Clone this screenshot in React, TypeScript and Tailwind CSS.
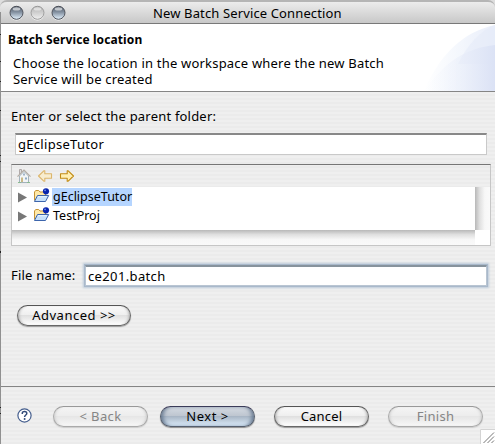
import React from "react";

const STRIPES =
  "bg-[repeating-linear-gradient(180deg,#efefef_0px,#efefef_2px,#ebebeb_2px,#ebebeb_4px)]";

function TrafficLight({ active, id }: { active: boolean; id: string }) {
  return (
    <svg width="15" height="16" viewBox="0 0 15 16" className="block">
      <defs>
        <linearGradient id={id} x1="0" y1="0" x2="0" y2="1">
          <stop offset="0" stopColor={active ? "#4c5563" : "#b0b0b0"} />
          <stop offset="0.45" stopColor={active ? "#8390a0" : "#cdcdcd"} />
          <stop offset="1" stopColor={active ? "#e4f3ff" : "#f0f0f0"} />
        </linearGradient>
      </defs>
      <circle cx="7.5" cy="8.5" r="6.9" fill="#f4f4f4" />
      <circle cx="7.5" cy="7.8" r="6.5" fill={"url(#" + id + ")"} stroke={active ? "#4b4f58" : "#999"} strokeWidth="1" />
      <ellipse cx="7.5" cy="3.9" rx="3.8" ry="1.7" fill="#fff" opacity={active ? 0.6 : 0.5} />
    </svg>
  );
}

function HomeIcon() {
  return (
    <svg width="14" height="16" viewBox="0 0 14 16" className="block">
      <path d="M2.5 8v6.5h9V8L7 3.5z" fill="#f2f5f6" stroke="#a3b2bc" />
      <path d="M2.5 6V1.5h2V4" fill="#ddd" stroke="#b0a9a9" />
      <path d="M.5 8.7L7 2l6.5 6.7" fill="none" stroke="#b3aca4" strokeWidth="1.2" />
      <path d="M6 5.5h2v2H6z" fill="#9fb3c7" />
      <path d="M4 9.5h2V14H4z" fill="#c9b988" />
      <path d="M8 9.5h2v2H8z" fill="#8fabc5" />
      <path d="M1 14.5h3M10 14.5h3" stroke="#8bbb91" />
    </svg>
  );
}

function ArrowIcon({ dim }: { dim: boolean }) {
  return (
    <svg width="16" height="14" viewBox="0 0 16 14" className={dim ? "block -scale-x-100" : "block"}>
      <path
        d="M1.5 4.7h6.7V1.8h1L14.5 7l-5.3 5.2h-1V9.3H1.5z"
        fill={dim ? "#f8edcf" : "#fff0b4"}
        stroke={dim ? "#dcb66c" : "#c18b14"}
        strokeWidth="1.1"
        strokeLinejoin="round"
      />
    </svg>
  );
}

function ProjectIcon() {
  return (
    <svg width="17" height="15" viewBox="0 0 17 15" className="block">
      <path d="M1.5 12.5V4l1.2-1.5h3L7 4h5.5v4" fill="#ffe9a8" stroke="#c59336" />
      <path d="M1.5 13.5l3-6h11.2l-3.2 6z" fill="#c5dffa" stroke="#3d65ac" strokeLinejoin="round" />
      <path d="M5 8.7h8.8" stroke="#edf7ff" />
      <circle cx="13" cy="3.3" r="3.1" fill="#0924ac" />
      <circle cx="12.1" cy="2.3" r="0.9" fill="#6e8eee" />
    </svg>
  );
}

function TreeRow({ label, selected }: { label: string; selected?: boolean }) {
  return (
    <div className="flex h-[19px] items-center">
      <svg width="9" height="11" viewBox="0 0 9 11" className="mt-[2px] ml-[6px] block">
        <path d="M0 0.5L9 5.5L0 10.5z" fill="#777" />
      </svg>
      <div className="-mt-[2px] ml-[6px]"><ProjectIcon /></div>
      <div className={selected ? "ml-[2px] h-[18px] w-[80px] bg-[#b5d5ff] pl-px leading-[16px]" : "ml-[2px] h-[18px] pl-px leading-[16px]"}>
        <span className="text-[12.5px]">{label}</span>
      </div>
    </div>
  );
}

function AquaButton({ children, kind, width }: { children: React.ReactNode; kind: "normal" | "default" | "disabled"; width: string }) {
  const look = {
    normal:
      "border-[#686868] border-t-[#555] bg-[linear-gradient(180deg,#fafafa_0%,#efefef_46%,#e0e0e0_50%,#fff_100%)] shadow-[0_1px_1px_#9b9b9b,inset_3px_0_3px_-2px_#aaa,inset_-3px_0_3px_-2px_#aaa]",
    default:
      "border-[#555f6e] border-t-[#3b3c59] bg-[linear-gradient(180deg,#d4dae2_0%,#bec6d0_46%,#a9b6c5_50%,#dcedfb_100%)] shadow-[0_1px_1px_#8e8e8e,inset_4px_0_4px_-2px_#61748c,inset_-4px_0_4px_-2px_#61748c]",
    disabled:
      "border-[#aaa] border-t-[#999] bg-[linear-gradient(180deg,#f4f4f4_0%,#ededed_46%,#e6e6e6_50%,#f7f7f7_100%)] text-[#858585] shadow-[0_1px_1px_#ccc,inset_3px_0_3px_-2px_#ccc,inset_-3px_0_3px_-2px_#ccc]",
  }[kind];
  return (
    <button className={"flex h-[21px] shrink-0 items-center justify-center rounded-full border whitespace-nowrap " + width + " " + look}>
      {children}
    </button>
  );
}

export default function App() {
  return (
    <div className={"relative flex h-[444px] w-[495px] flex-col overflow-hidden font-['Noto_Sans','Open_Sans',sans-serif] text-[13px] text-black " + STRIPES}>
      <header className="flex h-[24px] shrink-0 bg-[#dedede]">
        <div className="flex w-full items-center rounded-t-[7px] border-t-2 border-b border-t-[#b5b5b5] border-b-[#787878] bg-[linear-gradient(180deg,#ececec,#c8c8c8)] pl-[8.5px]">
          <div className="mt-px flex gap-[6px]">
            <TrafficLight active id="lightClose" />
            <TrafficLight active={false} id="lightMinimize" />
            <TrafficLight active id="lightZoom" />
          </div>
          <h1 className="ml-[87.5px] text-[13px] leading-[18px] font-normal tracking-[0.13px] whitespace-nowrap">New Batch Service Connection</h1>
        </div>
      </header>

      <section className="flex h-[68px] shrink-0 border-b border-[#858585] bg-white">
        <div className="w-[400px] shrink-0">
          <h2 className="mt-[8px] ml-[8px] text-[12px] leading-[16px] font-bold tracking-[0.1px] whitespace-nowrap">Batch Service location</h2>
          <p className="mt-[7px] ml-[13px] leading-[16px] tracking-[0.2px] whitespace-nowrap">
            Choose the location in the workspace where the new Batch
            <br />
            Service will be created
          </p>
        </div>
        <svg width="95" height="67" viewBox="0 0 95 67" className="block shrink-0">
          <defs>
            <linearGradient id="waveBack" x1="0" x2="1">
              <stop offset="0" stopColor="#fff" />
              <stop offset="0.45" stopColor="#f5f8fd" />
              <stop offset="1" stopColor="#e9eefa" />
            </linearGradient>
            <linearGradient id="waveFront" x1="0" x2="1">
              <stop offset="0" stopColor="#f4f7fd" stopOpacity="0" />
              <stop offset="1" stopColor="#dbe2f5" />
            </linearGradient>
          </defs>
          <path d="M24 67C39 32 62 8 95 1V67z" fill="url(#waveBack)" />
          <path d="M58 40C68 20 80 7 95 1V40z" fill="#e3eaf8" opacity=".5" />
          <path d="M24 67C44 38 66 24 95 21V67z" fill="url(#waveFront)" />
        </svg>
      </section>

      <main className="flex h-[294px] shrink-0 flex-col">
        <label className="mt-[15px] ml-[11px] h-[18px] leading-[18px] tracking-[0.2px] whitespace-nowrap">Enter or select the parent folder:</label>
        <div className="mt-[8px] ml-[15px] h-[22px] w-[472px] border border-t-2 border-[#c9c9c9] border-t-[#888] bg-white pl-[2px] leading-[18px]">
          <span className="tracking-[0.3px]">gEclipseTutor</span>
        </div>
        <div className="mt-[9px] ml-[11px] flex h-[82px] w-[480px] flex-col border border-[#c6c6c6] border-t-[#777]">
          <div className="flex h-[22px] shrink-0 items-center gap-[6px] pl-[5px]">
            <HomeIcon />
            <ArrowIcon dim />
            <ArrowIcon dim={false} />
          </div>
          <div className="flex h-[43px] shrink-0">
            <div className="w-[463px] bg-white">
              <TreeRow label="gEclipseTutor" selected />
              <TreeRow label="TestProj" />
            </div>
            <div className="w-[15px] bg-[linear-gradient(90deg,#b8b8b8,#dfdfdf_30%,#f7f7f7_65%,#fafafa)]" />
          </div>
          <div className="flex h-[15px] shrink-0">
            <div className="w-[463px] bg-[linear-gradient(180deg,#b8b8b8,#dfdfdf_30%,#f7f7f7_65%,#fafafa)]" />
            <div className="w-[15px] bg-white" />
          </div>
        </div>
        <div className="mt-[19px] flex h-[21px] items-center">
          <label className="w-[74px] pl-[11px] leading-[21px] tracking-[0.2px] whitespace-nowrap">File name:</label>
          <div className="ml-[11px] h-[21px] w-[402px] border border-t-2 border-[#b9c5d2] border-t-[#87939d] bg-white pl-[2px] leading-[18px] shadow-[0_0_0_1px_#a9b9cb,0_0_2px_2px_#bccbda]">
            <span className="tracking-[0.36px]">ce201.batch</span>
          </div>
        </div>
        <div className="mt-[19px] ml-[17px]">
          <AquaButton kind="normal" width="w-[114px]"><span className="tracking-[0.5px]">Advanced &gt;&gt;</span></AquaButton>
        </div>
      </main>

      <footer className="flex h-[58px] shrink-0 items-start border-t border-[#858585] pt-[19px]">
        <svg width="15" height="15" viewBox="0 0 15 15" className="mt-[2px] ml-[16.5px] block shrink-0">
          <circle cx="7.5" cy="7.5" r="6.6" fill="#fff" stroke="#465f8e" strokeWidth="1.2" />
          <path d="M5.3 6V5.2C5.3 2.9 9.8 2.9 9.8 5.4C9.8 7 7.6 7 7.6 8.9" fill="none" stroke="#334b79" strokeWidth="1.5" />
          <circle cx="7.6" cy="11" r="1" fill="#334b79" />
        </svg>
        <div className="ml-[21.5px] flex">
          <AquaButton kind="disabled" width="w-[95px]"><span className="tracking-[0.4px]">&lt; Back</span></AquaButton>
          <div className="ml-[12px]"><AquaButton kind="default" width="w-[95px]"><span className="tracking-[0.5px]">Next &gt;</span></AquaButton></div>
          <div className="ml-[19px]"><AquaButton kind="normal" width="w-[95px]"><span className="tracking-[0.2px]">Cancel</span></AquaButton></div>
          <div className="ml-[19px]"><AquaButton kind="disabled" width="w-[95px]"><span className="tracking-[0.3px]">Finish</span></AquaButton></div>
        </div>
      </footer>

      <svg width="15" height="15" viewBox="0 0 15 15" className="absolute right-0 bottom-0">
        <path d="M0 0h15v15H0z" fill="#fff" />
        <path d="M.5 15V.5H15" fill="none" stroke="#d4d4d4" />
        <path d="M3.5 14L14 3.5M7.5 14L14 7.5M11.5 14L14 11.5" stroke="#777" />
      </svg>
      <svg width="1" height="432" viewBox="0 0 1 432" className="absolute top-[12px] left-0">
        <path d="M0 0h1v432H0z" fill="#909090" />
        <path d="M0 22h1v1H0zM0 49h1v1H0zM0 69h1v1H0zM0 98h1v1H0zM0 143h1v1H0zM0 149h1v1H0zM0 239h1v2H0zM0 395h1v1H0zM0 401h1v1H0z" fill="#222" />
      </svg>
    </div>
  );
}
